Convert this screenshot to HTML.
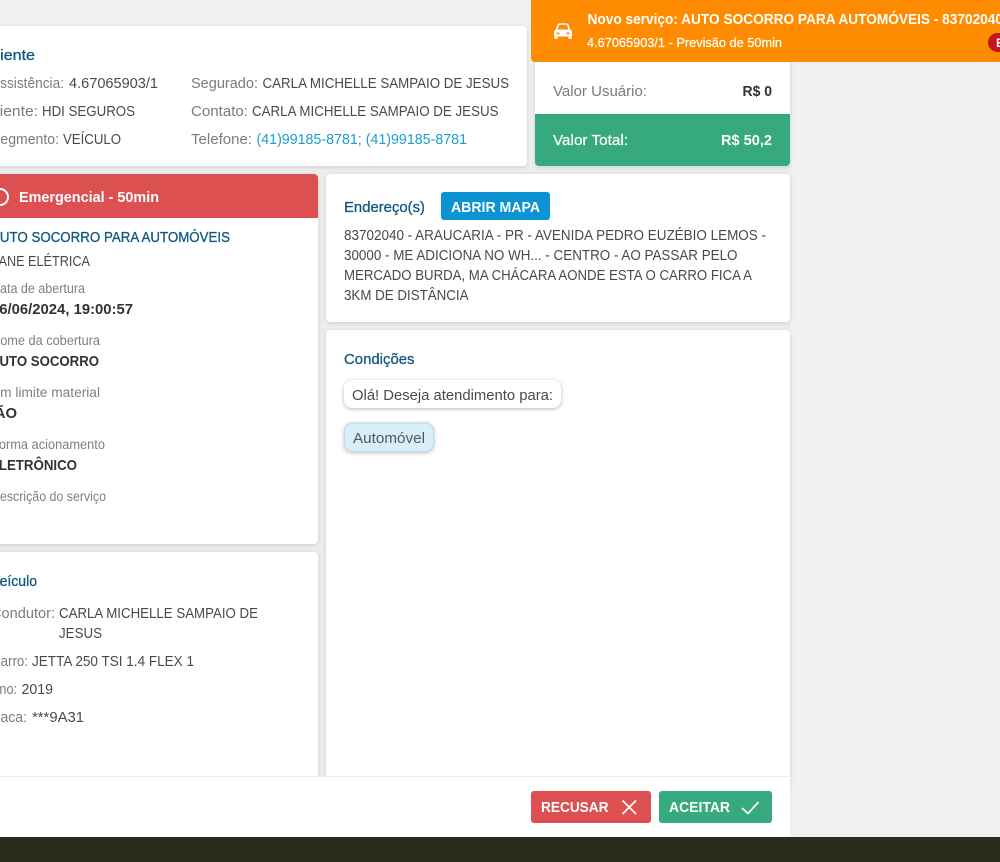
<!DOCTYPE html>
<html lang="pt-BR">
<head>
<meta charset="utf-8">
<title>Novo serviço</title>
<style>
html,body{margin:0;padding:0;width:1000px;height:862px;overflow:hidden;background:#f0f0f0}
svg{display:block}
text{font-family:"Liberation Sans",sans-serif;font-size:14.5px;fill:#4a4a4a;white-space:pre}
.l{fill:#7b7b7b}
.s{fill:#808080;font-size:13.5px}
.b{font-weight:700;fill:#333;font-size:15px}
.t{fill:#11597f;stroke:#11597f;stroke-width:.3}
.w{fill:#fff;font-weight:700;font-size:14.5px}
.a{fill:#1b9ed0}
.sh{filter:drop-shadow(0 1px 2px rgba(0,0,0,.14))}
</style>
</head>
<body>
<svg width="1000" height="862" viewBox="0 0 1000 862" xmlns="http://www.w3.org/2000/svg">
<rect width="1000" height="862" fill="#f0f0f0"/>
<rect x="0" y="167" width="790" height="610" fill="#ededed"/>

<g class="sh" fill="#fff">
<rect x="-20" y="26" width="547" height="140" rx="4"/>
<rect x="535" y="40" width="255" height="126" rx="4"/>
<rect x="-20" y="174" width="338" height="370" rx="4"/>
<rect x="-20" y="552" width="338" height="240" rx="4"/>
<rect x="326" y="174" width="464" height="148" rx="4"/>
<rect x="326" y="330" width="464" height="460" rx="4"/>
</g>

<path d="M-20 174H314a4 4 0 0 1 4 4V218H-20Z" fill="#dc5052"/>
<circle cx="0" cy="197" r="8" fill="none" stroke="#fff" stroke-width="2"/>
<path d="M535 114H790V162a4 4 0 0 1-4 4H539a4 4 0 0 1-4-4Z" fill="#37a97f"/>

<rect x="0" y="776" width="790" height="61" fill="#fff"/>
<rect x="0" y="776" width="790" height="1" fill="#ececec"/>
<rect x="0" y="837" width="1000" height="25" fill="#2a2c1b"/>

<!-- Cliente -->
<text class="t" x="-15" y="60" textLength="50" lengthAdjust="spacingAndGlyphs">Cliente</text>
<text class="l" x="-9" y="88" textLength="73" lengthAdjust="spacingAndGlyphs">Assistência:</text>
<text x="69" y="88" textLength="89" lengthAdjust="spacingAndGlyphs">4.67065903/1</text>
<text class="l" x="-15" y="116" textLength="53" lengthAdjust="spacingAndGlyphs">Cliente:</text>
<text x="42" y="116" textLength="93" lengthAdjust="spacingAndGlyphs">HDI SEGUROS</text>
<text class="l" x="-9" y="144" textLength="68" lengthAdjust="spacingAndGlyphs">Segmento:</text>
<text x="63" y="144" textLength="58" lengthAdjust="spacingAndGlyphs">VEÍCULO</text>
<text class="l" x="191" y="88" textLength="67" lengthAdjust="spacingAndGlyphs">Segurado:</text>
<text x="262.500" y="88" textLength="246.500" lengthAdjust="spacingAndGlyphs">CARLA MICHELLE SAMPAIO DE JESUS</text>
<text class="l" x="191" y="116" textLength="57" lengthAdjust="spacingAndGlyphs">Contato:</text>
<text x="252" y="116" textLength="246.500" lengthAdjust="spacingAndGlyphs">CARLA MICHELLE SAMPAIO DE JESUS</text>
<text class="l" x="191" y="144" textLength="61" lengthAdjust="spacingAndGlyphs">Telefone:</text>
<text class="a" x="256.500" y="144" textLength="210.500" lengthAdjust="spacingAndGlyphs">(41)99185-8781; (41)99185-8781</text>

<!-- Valores -->
<text class="l" x="553" y="96" textLength="94" lengthAdjust="spacingAndGlyphs">Valor Usuário:</text>
<text class="b" x="742.500" y="96" textLength="29.500" lengthAdjust="spacingAndGlyphs">R$ 0</text>
<text x="553" y="145" textLength="75" lengthAdjust="spacingAndGlyphs" style="fill:#fff;stroke:#fff;stroke-width:.2">Valor Total:</text>
<text class="w" x="721" y="145" textLength="51" lengthAdjust="spacingAndGlyphs">R$ 50,2</text>

<!-- Serviço -->
<text class="w" x="19" y="202" textLength="140" lengthAdjust="spacingAndGlyphs">Emergencial - 50min</text>
<text class="t" x="-9" y="242" textLength="239" lengthAdjust="spacingAndGlyphs">AUTO SOCORRO PARA AUTOMÓVEIS</text>
<text x="-9" y="266" textLength="99" lengthAdjust="spacingAndGlyphs">PANE ELÉTRICA</text>
<text class="s" x="-9" y="293" textLength="94" lengthAdjust="spacingAndGlyphs">Data de abertura</text>
<text class="b" x="-9" y="314" textLength="142" lengthAdjust="spacingAndGlyphs">26/06/2024, 19:00:57</text>
<text class="s" x="-9" y="345" textLength="109" lengthAdjust="spacingAndGlyphs">Nome da cobertura</text>
<text class="b" x="-10" y="366" textLength="109" lengthAdjust="spacingAndGlyphs">AUTO SOCORRO</text>
<text class="s" x="-9" y="397" textLength="109" lengthAdjust="spacingAndGlyphs">Em limite material</text>
<text class="b" x="-16" y="418" textLength="33" lengthAdjust="spacingAndGlyphs">NÃO</text>
<text class="s" x="-9" y="449" textLength="114" lengthAdjust="spacingAndGlyphs">Forma acionamento</text>
<text class="b" x="-10" y="470" textLength="87" lengthAdjust="spacingAndGlyphs">ELETRÔNICO</text>
<text class="s" x="-9" y="501" textLength="115" lengthAdjust="spacingAndGlyphs">Descrição do serviço</text>

<!-- Veículo -->
<text class="t" x="-9" y="586" textLength="46" lengthAdjust="spacingAndGlyphs">Veículo</text>
<text class="l" x="-9" y="618" textLength="64" lengthAdjust="spacingAndGlyphs">Condutor:</text>
<text x="59" y="618" textLength="199" lengthAdjust="spacingAndGlyphs">CARLA MICHELLE SAMPAIO DE</text>
<text x="59" y="638" textLength="43" lengthAdjust="spacingAndGlyphs">JESUS</text>
<text class="l" x="-9" y="666" textLength="37" lengthAdjust="spacingAndGlyphs">Carro:</text>
<text x="32" y="666" textLength="162" lengthAdjust="spacingAndGlyphs">JETTA 250 TSI 1.4 FLEX 1</text>
<text class="l" x="-9" y="694" textLength="26" lengthAdjust="spacingAndGlyphs">Ano:</text>
<text x="21.500" y="694" textLength="31.500" lengthAdjust="spacingAndGlyphs">2019</text>
<text class="l" x="-12" y="722" textLength="39" lengthAdjust="spacingAndGlyphs">Placa:</text>
<text x="32" y="722" textLength="52" lengthAdjust="spacingAndGlyphs">***9A31</text>

<!-- Endereço -->
<text class="t" x="344" y="212" textLength="81" lengthAdjust="spacingAndGlyphs">Endereço(s)</text>
<rect x="441" y="192" width="109" height="28" rx="3" fill="#0b94d1"/>
<text class="w" x="451" y="212" textLength="89" lengthAdjust="spacingAndGlyphs">ABRIR MAPA</text>
<text x="344" y="240" textLength="422" lengthAdjust="spacingAndGlyphs">83702040 - ARAUCARIA - PR - AVENIDA PEDRO EUZÉBIO LEMOS -</text>
<text x="344" y="260" textLength="393.500" lengthAdjust="spacingAndGlyphs">30000 - ME ADICIONA NO WH... - CENTRO - AO PASSAR PELO</text>
<text x="344" y="280" textLength="408" lengthAdjust="spacingAndGlyphs">MERCADO BURDA, MA CHÁCARA AONDE ESTA O CARRO FICA A</text>
<text x="344" y="300" textLength="124.500" lengthAdjust="spacingAndGlyphs">3KM DE DISTÂNCIA</text>

<!-- Condições -->
<text class="t" x="344" y="364" textLength="70.500" lengthAdjust="spacingAndGlyphs">Condições</text>
<rect x="344" y="380" width="217" height="28" rx="8" fill="#fff" style="filter:drop-shadow(0 1px 2px rgba(0,0,0,.28))"/>
<text x="352" y="400" textLength="201" lengthAdjust="spacingAndGlyphs">Olá! Deseja atendimento para:</text>
<rect x="344.500" y="423" width="89" height="28.500" rx="8" fill="#d8eef9" stroke="#b7dcec" style="filter:drop-shadow(0 1px 2px rgba(0,0,0,.25))"/>
<text x="353" y="443" textLength="72" lengthAdjust="spacingAndGlyphs" style="fill:#4c5b64">Automóvel</text>

<!-- Botões -->
<rect x="531" y="791" width="120" height="32" rx="3" fill="#dc5052"/>
<text class="w" x="541" y="812" textLength="67.500" lengthAdjust="spacingAndGlyphs">RECUSAR</text>
<path d="M622.500 800.500 636 814M636 800.500 622.500 814" stroke="#fff" stroke-width="1.700" fill="none"/>
<rect x="659" y="791" width="113" height="32" rx="3" fill="#37a97f"/>
<text class="w" x="669" y="812" textLength="61" lengthAdjust="spacingAndGlyphs">ACEITAR</text>
<path d="M742 808 748 813.500 758.500 802" stroke="#fff" stroke-width="1.700" fill="none"/>

<!-- Toast -->
<path d="M531 0H1000V62H535a4 4 0 0 1-4-4Z" fill="#ff8c00"/>
<path d="M556.500 30 558 25.500a2.200 2.200 0 0 1 2-1.500h6a2.200 2.200 0 0 1 2 1.500L569.500 30" fill="none" stroke="#fff" stroke-width="1.600"/>
<path d="M556.500 29.500h13a2.500 2.500 0 0 1 2.500 2.500V36.500h-.500V39h-3V36.500h-11V39h-3V36.500h-.500V32A2.500 2.500 0 0 1 556.500 29.500Z" fill="#fff"/>
<rect x="556.500" y="32.500" width="3" height="1.800" fill="#ff8c00"/>
<rect x="566.500" y="32.500" width="3" height="1.800" fill="#ff8c00"/>
<text class="w" x="587.500" y="24" textLength="415.500" lengthAdjust="spacingAndGlyphs">Novo serviço: AUTO SOCORRO PARA AUTOMÓVEIS - 83702040</text>
<text x="587" y="47" textLength="195" lengthAdjust="spacingAndGlyphs" style="fill:#fff;font-size:13px;stroke:#fff;stroke-width:.2">4.67065903/1 - Previsão de 50min</text>
<rect x="988" y="33" width="40" height="19" rx="9.500" fill="#c4161c"/>
<text class="w" x="996" y="47" style="font-size:12px">E</text>
</svg>
</body>
</html>
